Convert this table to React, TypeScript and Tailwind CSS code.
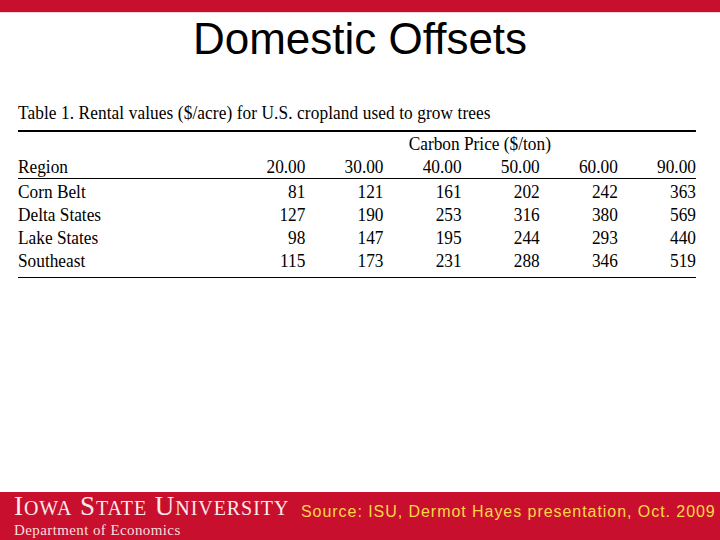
import React from "react";

const rows: string[][] = [
  ["Corn Belt", "81", "121", "161", "202", "242", "363"],
  ["Delta States", "127", "190", "253", "316", "380", "569"],
  ["Lake States", "98", "147", "195", "244", "293", "440"],
  ["Southeast", "115", "173", "231", "288", "346", "519"],
];

const prices = ["20.00", "30.00", "40.00", "50.00", "60.00", "90.00"];

export default function App() {
  return (
    <div className="w-[720px] h-[540px] bg-white flex flex-col overflow-hidden">
      <div className="h-[12px] shrink-0 bg-[#c8102e]" />
      <div className="h-[1px] shrink-0 bg-[#f6d5da]" />
      <h1 className="mt-[4px] text-center text-[44px] leading-[44px] text-black font-['Liberation_Sans',Arial,sans-serif]">
        Domestic Offsets
      </h1>
      <div className="mt-[40px] pl-[18px] flex-1">
        <div className="w-[745px] origin-left scale-x-[0.91] font-['Liberation_Serif','Times_New_Roman',serif] text-[19px] leading-[23px] text-black">
          <div className="whitespace-nowrap tracking-[0.1px]">
            Table 1. Rental values ($/acre) for U.S. cropland used to grow trees
          </div>
          <div className="mt-[6px] h-[1.5px] bg-black" />
          <div className="grid grid-cols-[230px_repeat(6,minmax(0,1fr))]">
            <div />
            <div className="col-span-6 pl-[40px] text-center whitespace-nowrap">
              Carbon Price ($/ton)
            </div>
            <div>Region</div>
            {prices.map((p) => (
              <div key={p} className="text-right">
                {p}
              </div>
            ))}
          </div>
          <div className="h-[1.5px] bg-black" />
          <div className="grid grid-cols-[230px_repeat(6,minmax(0,1fr))] pt-[1px]">
            {rows.map((r) =>
              r.map((c, i) => (
                <div
                  key={r[0] + i}
                  className={i === 0 ? "whitespace-nowrap" : "text-right"}
                >
                  {c}
                </div>
              ))
            )}
          </div>
          <div className="mt-[4.5px] h-[1.5px] bg-black" />
        </div>
      </div>
      <div className="h-[48px] shrink-0 bg-[#c8102e] flex items-start">
        <div className="w-[301px] shrink-0 pl-[14px] flex flex-col">
          <div className="pt-[2px] h-[26px] leading-[24px] text-[27px] tracking-[0.95px] text-[#fbeaea] whitespace-nowrap font-['Liberation_Serif','Times_New_Roman',serif]">
            I<span className="text-[20px]">OWA</span> S
            <span className="text-[20px]">TATE</span> U
            <span className="text-[20px]">NIVERSITY</span>
          </div>
          <div className="mt-[3px] text-[15px] leading-[18px] tracking-[0.4px] text-[#f3dede] whitespace-nowrap font-['Liberation_Serif','Times_New_Roman',serif]">
            Department of Economics
          </div>
        </div>
        <div className="pt-[10px] text-[16px] leading-[20px] tracking-[0.95px] text-[#fcd645] whitespace-nowrap font-['Liberation_Sans',Arial,sans-serif]">
          Source: ISU, Dermot Hayes presentation, Oct. 2009
        </div>
      </div>
    </div>
  );
}
